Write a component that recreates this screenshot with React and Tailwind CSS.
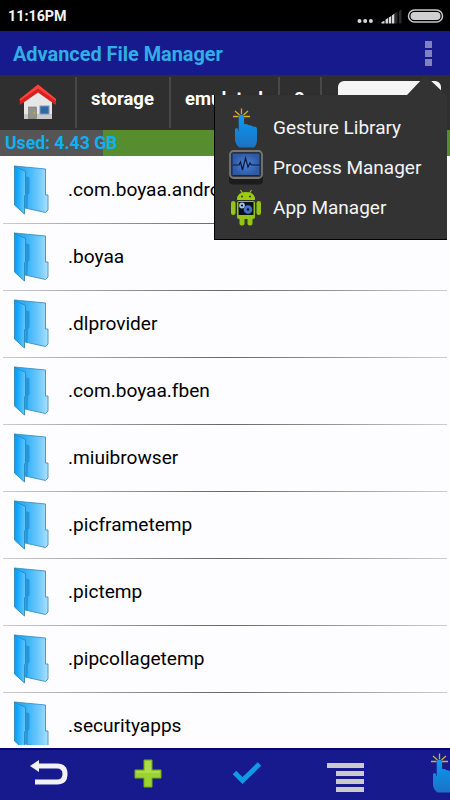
import { useId } from 'react';

const FOLDERS = [
  '.com.boyaa.android',
  '.boyaa',
  '.dlprovider',
  '.com.boyaa.fben',
  '.miuibrowser',
  '.picframetemp',
  '.pictemp',
  '.pipcollagetemp',
  '.securityapps',
];

const MENU = [
  { label: 'Gesture Library', Icon: GestureIcon },
  { label: 'Process Manager', Icon: ProcessIcon },
  { label: 'App Manager', Icon: AppIcon },
];

function GestureIcon() {
  const id = useId();
  return (
    <svg width="34" height="40" viewBox="0 0 34 40" className="shrink-0">
      <defs>
        <linearGradient id={id} x1="0" y1="0" x2="0" y2="1">
          <stop offset="0" stopColor="#0a9bf5" />
          <stop offset="1" stopColor="#1b72c2" />
        </linearGradient>
      </defs>
      <path d="M4 8.500h5.500M15 8.500h6M6 3l4.500 4M19 3l-4.500 4M12.500 .5V6" stroke="#d8b21c" strokeWidth="1.300" fill="none" />
      <path
        d="M12.400 6.500q2.700 0 2.700 2.700V16q3-.4 4.600 1.200 2.500-.3 4 1.300 4.300-.3 4.300 3V32q0 4.500-3 7.500H10.500q-4-2.500-4.500-7.500V22q0-2 1.500-2Q9 20 9.700 23V9.200Q9.700 6.500 12.400 6.500z"
        fill={`url(#${id})`}
      />
    </svg>
  );
}

function ProcessIcon() {
  return (
    <svg width="34" height="40" viewBox="0 0 34 40" className="shrink-0">
      <defs>
        <radialGradient id="monitor">
          <stop offset="0" stopColor="#4a83d6" />
          <stop offset="1" stopColor="#2d59a5" />
        </radialGradient>
      </defs>
      <rect x="0" y="6" width="34" height="30.500" rx="4" fill="#1c1c1c" />
      <rect x="1" y="3" width="32" height="27" rx="3.500" fill="#3a3a3a" stroke="#777" strokeWidth="1.800" />
      <rect x="3" y="5" width="28" height="22.500" rx="1" fill="url(#monitor)" stroke="#1a2440" />
      <path d="M4 17h6l1.500-3 2 8 3-12 2.500 9 2-4 1.500 2h8" stroke="#0d1838" strokeWidth="1.200" fill="none" />
    </svg>
  );
}

function AppIcon() {
  return (
    <svg width="34" height="40" viewBox="0 0 34 40" className="shrink-0">
      <path d="M11.500 2l2.500 4M22.500 2l-2.500 4" stroke="#95c11f" strokeWidth="1.200" />
      <path d="M8 12q0-8 9-8t9 8z" fill="#9ccc12" />
      <circle cx="13" cy="8.500" r="1" fill="#333" />
      <circle cx="21" cy="8.500" r="1" fill="#333" />
      <g fill="#93c417">
        <rect x="2" y="13" width="4.500" height="14" rx="2.200" />
        <rect x="27.500" y="13" width="4.500" height="14" rx="2.200" />
        <rect x="8" y="13" width="18" height="18" rx="2" />
        <rect x="10.500" y="28" width="5" height="9.500" rx="2" />
        <rect x="18.500" y="28" width="5" height="9.500" rx="2" />
      </g>
      <rect x="9.500" y="14" width="15" height="13" fill="#0b0f16" />
      <circle cx="13" cy="17.500" r="2" stroke="#a3c0e6" strokeWidth="1.800" fill="none" />
      <circle cx="19" cy="21.500" r="2.800" stroke="#3d74cb" strokeWidth="3" fill="none" />
    </svg>
  );
}

function FolderIcon() {
  const id = useId();
  return (
    <svg width="36" height="50" viewBox="0 0 36 50" className="shrink-0">
      <defs>
        <linearGradient id={`${id}a`} x1="0" y1="0" x2="1" y2="0.150">
          <stop offset="0.200" stopColor="#08a2ff" />
          <stop offset="1" stopColor="#5fc6fb" />
        </linearGradient>
        <linearGradient id={`${id}b`}>
          <stop offset="0.300" stopColor="#2caefb" />
          <stop offset="0.750" stopColor="#74cbfc" />
          <stop offset="1" stopColor="#ace0ff" />
        </linearGradient>
      </defs>
      <path d="M.5 1l31 3v26H34v15l-2.500 2.500L11 43z" fill={`url(#${id}b)`} stroke="#3a92bd" strokeWidth="0.900" />
      <path d="M11.500 11l4 1.500V28l-1.500 2-.5 13h-2z" fill="#2396dc" />
      <path d="M.5 1l11 5.500v23l-1 1.500v18L.5 40z" fill={`url(#${id}a)`} stroke="#2e88b4" strokeWidth="0.900" />
    </svg>
  );
}

function HomeIcon() {
  return (
    <svg width="38" height="36" viewBox="0 0 38 36">
      <path d="M5 17L19 5l14 12v17q0 1-1 1H6q-1 0-1-1z" fill="#e6e6e6" />
      <path d="M5 30h28v4q0 1-1 1H6q-1 0-1-1z" fill="#c9c9c9" />
      <path d="M19 .5L.8 15v5.500h1L19 8.500l17 12h1V15z" fill="#d91f1f" />
      <path d="M19 .5L.8 15v2L19 4.500 37 17v-2z" fill="#f4443c" />
      <rect x="9.500" y="23" width="8" height="11.500" fill="#8f9389" stroke="#777" strokeWidth="0.600" />
      <circle cx="15.500" cy="29" r="1" fill="#c9ad2d" />
      <rect x="21" y="22" width="9" height="8" fill="#2f67ad" stroke="#8796ad" />
    </svg>
  );
}

function StatusBar() {
  return (
    <div className="flex h-[31px] items-center bg-black pt-[2px] pr-[6px] pl-2">
      <span className="pb-[2px] text-[14.300px] leading-4 font-bold text-gray-100">11:16PM</span>
      <svg width="87" height="15" viewBox="0 0 87 15" className="ml-auto">
        <g fill="#d8d8d8">
          <circle cx="2.500" cy="12" r="2" />
          <circle cx="8.200" cy="12" r="2" />
          <circle cx="13.900" cy="12" r="2" />
          <path d="M24.500 14.500v-1.500l3-1.300v2.800zM28.500 14.500v-4l2.500-1.500v5.500zM31.700 14.500V8.500l2.500-1.500v7.500zM34.900 14.500V6.500l2.500-2v10z" />
        </g>
        <path d="M38 14.500V4L40.500 2.500v12zM42 14.500V2l2.500-1.500v14z" fill="#2b2b2b" />
        <rect x="51.500" y="1" width="34" height="12" rx="6" fill="none" stroke="#c8c8c8" strokeWidth="1.500" />
        <rect x="53.500" y="3" width="30" height="8" rx="4" fill="#cfcfcf" />
      </svg>
    </div>
  );
}

function OverflowMenu() {
  return (
    <div className="absolute top-[95px] left-[214px] h-[145px] w-[233px] border-b border-l border-black bg-[#333] pt-[13px] pl-[14px]">
      <svg width="40" height="20" viewBox="0 0 40 20" className="absolute -top-[20px] right-0">
        <path d="M0 20L16.500 2.500q2-2 4 0L39 20z" fill="#333" />
      </svg>
      {MENU.map(({ label, Icon }) => (
        <div key={label} className="flex h-10 items-center gap-[10px] text-[19px] text-gray-100">
          <Icon />
          <span className="whitespace-nowrap">{label}</span>
        </div>
      ))}
    </div>
  );
}

export default function App() {
  return (
    <div className="relative flex h-[800px] w-[450px] flex-col overflow-hidden bg-[#fdfcff] font-['Roboto',sans-serif]">
      <StatusBar />

      <header className="flex h-11 items-center justify-between bg-[#161a8d] pr-[18px] pl-[13px]">
        <h1 className="pt-[3px] text-[19.900px] font-bold text-[#31aee5]">Advanced File Manager</h1>
        <div className="flex flex-col gap-[2px]">
          <div className="size-[7px] bg-[#8080c4]" />
          <div className="size-[7px] bg-[#8080c4]" />
          <div className="size-[7px] bg-[#8080c4]" />
        </div>
      </header>

      {/* Breadcrumbs */}
      <nav className="flex h-[55px] items-center bg-[#2f2f2f] text-[18.500px] font-bold text-white">
        <div className="flex w-[75px] justify-center pb-px">
          <HomeIcon />
        </div>
        <div className="h-[51px] w-[94px] border-l-2 border-[#484848] pt-[9px] pl-[14px]">storage</div>
        <div className="h-[51px] w-[109px] border-l-2 border-[#484848] pt-[9px] pl-[14px]">emulated</div>
        <div className="h-[51px] w-[42px] border-l-2 border-[#484848] pt-[9px] pl-[14px]">0</div>
        <div className="h-[51px] border-l-2 border-[#484848] pl-4">
          <div className="mt-1 flex h-10 w-[103px] items-center justify-center rounded-md bg-[#f5f5f5] pt-px text-lg font-medium text-[#222]">
            Search
          </div>
        </div>
      </nav>

      {/* Storage usage */}
      <div className="flex h-[26px] items-center bg-linear-to-r from-[#555] from-[103px] to-[#568e2f] to-[103px] pt-px pl-[5px] text-[17.600px] font-bold text-[#0fb1f5]">
        Used: 4.43 GB
      </div>

      <main className="mb-[3px] h-[589px] overflow-hidden pt-px">
        {FOLDERS.map((name) => (
          <div key={name}>
            <div className="flex h-[66px] items-center gap-[18px] pl-[14px] text-[19.100px] text-black">
              <FolderIcon />
              <span>{name}</span>
            </div>
            <div className="mx-[3px] h-px bg-linear-to-r from-[#ccc] via-[#666] to-[#ccc]" />
          </div>
        ))}
      </main>

      {/* Toolbar */}
      <footer className="flex h-[52px] items-center border-t-2 border-[#05057c] bg-[#161a8d]">
        <div className="flex w-[98px] shrink-0 justify-center pb-[5px]">
          <svg width="38" height="26" viewBox="0 0 38 26">
            <path d="M9 6h18q8 0 8 8t-8 8H5" fill="none" stroke="#f2f2f5" strokeWidth="5" />
            <path d="M0 6L9 0v12z" fill="#f2f2f5" />
          </svg>
        </div>
        <div className="flex w-[99px] shrink-0 justify-center pb-[3px]">
          <svg width="30" height="30" viewBox="0 0 30 30">
            <path d="M11 1h8v10h9v8h-9v9h-8v-9H2v-8h9z" fill="#9bd42e" stroke="#76ad14" strokeLinejoin="round" />
            <path d="M12 2h6v10h9v2H3v-2h9z" fill="#aedd49" />
          </svg>
        </div>
        <div className="flex w-[99px] shrink-0 justify-center pb-[4px]">
          <svg width="30" height="24" viewBox="0 0 30 24">
            <path d="M2.500 11.500l8 8L27.500 3" fill="none" stroke="#1199e5" strokeWidth="5" />
          </svg>
        </div>
        <div className="flex w-[99px] shrink-0 justify-center">
          <div className="flex w-[37px] flex-col items-end gap-[3px] pt-[5px]">
            <div className="h-[5px] w-full bg-[#cbcbcf]" />
            <div className="h-[5px] w-7 bg-[#cbcbcf]" />
            <div className="h-[5px] w-7 bg-[#cbcbcf]" />
            <div className="h-[5px] w-7 bg-[#cbcbcf]" />
          </div>
        </div>
        <div className="shrink-0 pb-[5px] pl-[32px]">
          <GestureIcon />
        </div>
      </footer>

      <OverflowMenu />
    </div>
  );
}
